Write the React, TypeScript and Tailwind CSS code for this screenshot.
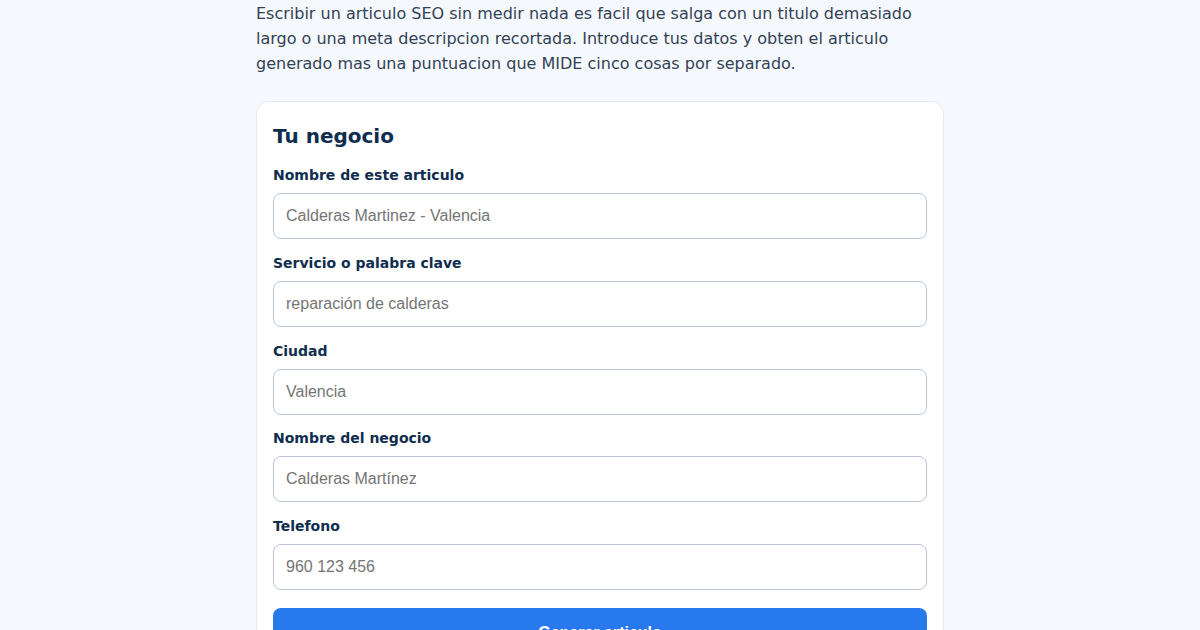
const fields = [
  { label: 'Nombre de este articulo', placeholder: 'Calderas Martinez - Valencia' },
  { label: 'Servicio o palabra clave', placeholder: 'reparación de calderas' },
  { label: 'Ciudad', placeholder: 'Valencia' },
  { label: 'Nombre del negocio', placeholder: 'Calderas Martínez' },
  { label: 'Telefono', placeholder: '960 123 456' },
];

export default function App() {
  return (
    <div
      className="min-h-screen bg-[#f5f9fd] overflow-hidden"
      style={{ fontFamily: '"DejaVu Sans", sans-serif' }}
    >
      <div className="w-[688px] mx-auto">
        <p className="pt-px text-base leading-[25px] text-[#334155] mb-[25px]">
          Escribir un articulo SEO sin medir nada es facil que salga con un titulo demasiado
          largo o una meta descripcion recortada. Introduce tus datos y obten el articulo
          generado mas una puntuacion que MIDE cinco cosas por separado.
        </p>

        {/* Form card */}
        <div className="bg-white border border-[#e3eaf3] rounded-xl px-4 pt-5 pb-6">
          <h2 className="text-xl font-bold leading-7 text-[#0f2d4f] mb-[15px]">Tu negocio</h2>

          {fields.map((f) => (
            <div key={f.label} className="mb-[13.75px]">
              <label className="block text-sm font-bold leading-5 text-[#0f2d4f] mb-2">
                {f.label}
              </label>
              <input
                type="text"
                placeholder={f.placeholder}
                className="w-full h-[46px] px-3 border border-[#b9c5da] rounded-lg text-base text-[#1e293b] placeholder:text-[#757575] outline-none"
                style={{ fontFamily: '"Liberation Sans", Arial, sans-serif' }}
              />
            </div>
          ))}

          <button
            className="w-full mt-1 py-[13px] rounded-lg bg-[#2979ee] text-white text-base font-bold leading-6"
            style={{ fontFamily: '"Liberation Sans", Arial, sans-serif' }}
          >
            Generar articulo
          </button>
        </div>
      </div>
    </div>
  );
}
